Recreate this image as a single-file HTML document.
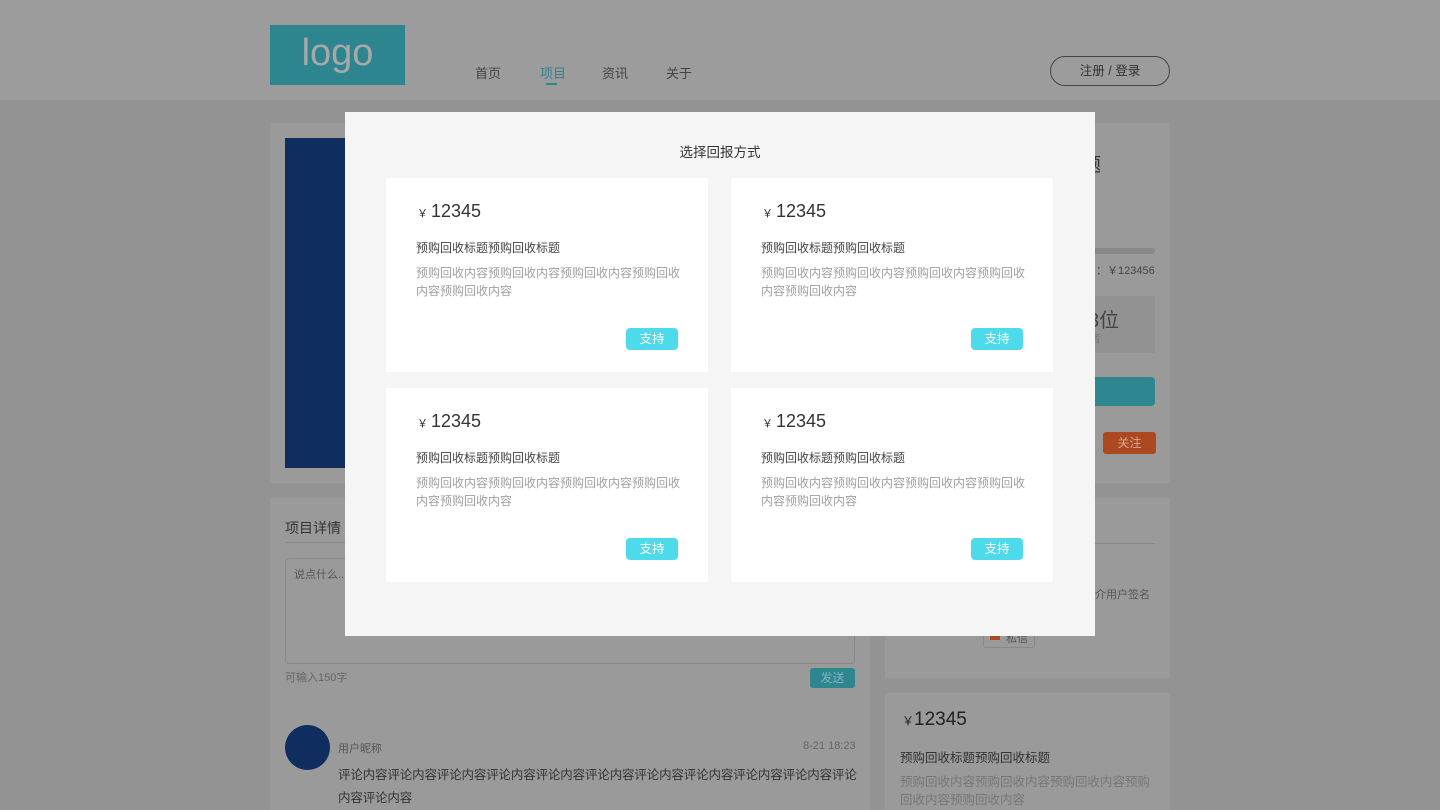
<!DOCTYPE html>
<html><head><meta charset="utf-8"><style>
*{margin:0;padding:0;box-sizing:border-box}
body{width:1440px;height:810px;overflow:hidden;background:#939393;font-family:"Liberation Sans","Noto Sans CJK SC",sans-serif;position:relative}
.a{position:absolute}
.hd{left:0;top:0;width:1440px;height:100px;background:#9c9c9c}
.pn{background:#9a9a9a}
.card{position:absolute;width:322px;height:194px;background:#fff}
.card .p{position:absolute;left:31px;top:23px;font-size:18px;color:#333}
.card .p small{font-size:11px;margin-right:3px}
.card .t{position:absolute;left:30px;top:61px;font-size:12px;color:#444}
.card .c{position:absolute;left:30px;top:86px;width:268px;font-size:12px;line-height:18px;color:#a0a0a0}
.card .b{position:absolute;left:240px;top:150px;width:52px;height:22px;background:#4ddbec;border-radius:4px;color:#fff;font-size:12.5px;text-align:center;line-height:22px}
</style></head><body>
<div class="a hd"></div>
<div class="a" style="left:270px;top:25px;width:135px;height:60px;background:#2d858f;color:#a8a8a8;font-size:38px;text-align:center;line-height:56px">logo</div>
<div class="a" style="left:475px;top:63px;font-size:13px;color:#444">首页</div>
<div class="a" style="left:540px;top:63px;font-size:13px;color:#2d8690">项目</div>
<div class="a" style="left:546px;top:83px;width:11px;height:2px;background:#2d8690"></div>
<div class="a" style="left:602px;top:63px;font-size:13px;color:#444">资讯</div>
<div class="a" style="left:666px;top:63px;font-size:13px;color:#444">关于</div>
<div class="a" style="left:1050px;top:56px;width:120px;height:30px;border:1px solid #444;border-radius:15px;text-align:center;line-height:28px;font-size:12.5px;color:#333">注册 / 登录</div>

<div class="a pn" style="left:270px;top:123px;width:600px;height:360px"></div>
<div class="a" style="left:285px;top:138px;width:80px;height:330px;background:#0f2e5f"></div>
<div class="a pn" style="left:885px;top:123px;width:285px;height:360px"></div>
<div class="a" style="left:1082px;top:150px;font-size:19px;color:#333">题</div>
<div class="a" style="left:1090px;top:248px;width:65px;height:6px;background:#888;border-radius:3px"></div>
<div class="a" style="left:1096px;top:262px;font-size:11px;color:#444">：￥123456</div>
<div class="a" style="left:1090px;top:296px;width:65px;height:57px;background:#929292"></div>
<div class="a" style="left:1088px;top:304px;font-size:20px;color:#444">3位</div>
<div class="a" style="left:1090px;top:330px;font-size:11px;color:#777">者</div>
<div class="a" style="left:1090px;top:377px;width:65px;height:29px;background:#2d8690;border-radius:4px"></div>
<div class="a" style="left:1103px;top:432px;width:53px;height:22px;background:#ad4920;border-radius:3px;color:#d8a890;font-size:12px;text-align:center;line-height:22px">关注</div>

<div class="a pn" style="left:270px;top:498px;width:600px;height:312px"></div>
<div class="a" style="left:285px;top:518px;font-size:14px;color:#333">项目详情</div>
<div class="a" style="left:285px;top:542px;width:60px;height:1px;background:#888"></div>
<div class="a" style="left:285px;top:558px;width:570px;height:106px;border:1px solid #888;border-radius:4px"></div>
<div class="a" style="left:294px;top:566px;font-size:11px;color:#555">说点什么...</div>
<div class="a" style="left:285px;top:669px;font-size:11px;color:#666">可输入150字</div>
<div class="a" style="left:810px;top:668px;width:45px;height:20px;background:#2d8690;border-radius:3px;color:#7fb5bb;font-size:12px;text-align:center;line-height:20px">发送</div>
<div class="a" style="left:285px;top:725px;width:45px;height:45px;border-radius:50%;background:#0f2e5f"></div>
<div class="a" style="left:338px;top:740px;font-size:11px;color:#555">用户昵称</div>
<div class="a" style="left:803px;top:740px;font-size:11px;color:#666">8-21 18:23</div>
<div class="a" style="left:338px;top:764px;width:520px;font-size:12.5px;letter-spacing:-0.15px;line-height:23px;color:#333">评论内容评论内容评论内容评论内容评论内容评论内容评论内容评论内容评论内容评论内容评论内容评论内容</div>

<div class="a pn" style="left:885px;top:498px;width:285px;height:180px"></div>
<div class="a" style="left:1090px;top:543px;width:65px;height:1px;background:#888"></div>
<div class="a" style="left:1095px;top:586px;font-size:11px;color:#555">介用户签名</div>
<div class="a" style="left:983px;top:630px;width:52px;height:18px;border:1px solid #888;border-radius:3px;font-size:11px;color:#555;line-height:16px;padding-left:22px">私信</div>
<div class="a" style="left:990px;top:634px;width:10px;height:6px;background:#ad4920"></div>
<div class="a pn" style="left:885px;top:693px;width:285px;height:117px"></div>
<div class="a" style="left:902px;top:709px;font-size:19px;color:#222"><small style="font-size:12px">￥</small>12345</div>
<div class="a" style="left:900px;top:747px;font-size:12.5px;color:#333">预购回收标题预购回收标题</div>
<div class="a" style="left:900px;top:773px;width:256px;font-size:12.5px;line-height:18px;color:#777">预购回收内容预购回收内容预购回收内容预购回收内容预购回收内容</div>

<div class="a" style="left:345px;top:112px;width:750px;height:524px;background:#f5f5f5">
<div class="a" style="left:0;top:29px;width:750px;text-align:center;font-size:13.5px;color:#333">选择回报方式</div>
<div class="card" style="left:41px;top:66px"><div class="p"><small>￥</small>12345</div><div class="t">预购回收标题预购回收标题</div><div class="c">预购回收内容预购回收内容预购回收内容预购回收内容预购回收内容</div><div class="b">支持</div></div>
<div class="card" style="left:386px;top:66px"><div class="p"><small>￥</small>12345</div><div class="t">预购回收标题预购回收标题</div><div class="c">预购回收内容预购回收内容预购回收内容预购回收内容预购回收内容</div><div class="b">支持</div></div>
<div class="card" style="left:41px;top:276px"><div class="p"><small>￥</small>12345</div><div class="t">预购回收标题预购回收标题</div><div class="c">预购回收内容预购回收内容预购回收内容预购回收内容预购回收内容</div><div class="b">支持</div></div>
<div class="card" style="left:386px;top:276px"><div class="p"><small>￥</small>12345</div><div class="t">预购回收标题预购回收标题</div><div class="c">预购回收内容预购回收内容预购回收内容预购回收内容预购回收内容</div><div class="b">支持</div></div>
</div>
</body></html>
